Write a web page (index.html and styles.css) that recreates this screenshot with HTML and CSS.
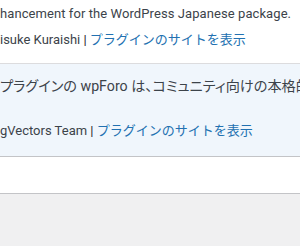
FILE: index.html
```html
<!DOCTYPE html>
<html lang="ja">
<head>
    <meta charset="UTF-8">
    <title>プラグイン</title>
    <link rel="stylesheet" href="styles.css">
</head>
<body>
    <div class="plugin-list">
        <!-- WP Multibyte Patch -->
        <div class="plugin-row">
            <p class="desc line-1">hancement for the WordPress Japanese package.</p>
            <p class="meta line-2">isuke Kuraishi <span class="sep">|</span> <a href="#">プラグインのサイトを表示</a></p>
        </div>

        <!-- wpForo (有効) -->
        <div class="plugin-row active">
            <p class="desc line-3">プラグインの wpForo は、コミュニティ向けの本格的なフォーラムです。</p>
            <p class="meta line-4">gVectors Team <span class="sep">|</span> <a href="#">プラグインのサイトを表示</a></p>
        </div>

        <div class="plugin-foot"></div>
    </div>
</body>
</html>
```

FILE: styles.css
```css
body {
    margin: 0;
    background: #f0f0f1;
    color: #3c434a;
    font-family: Roboto, "Noto Sans CJK JP", sans-serif;
    font-size: 13px;
    line-height: 20px;
}

.plugin-list {
    background: #fff;
    overflow: hidden;
}

.plugin-row {
    padding: 4px 0 13px;
    border-bottom: 1px solid #dcdcde;
}

.plugin-row.active {
    background: #f0f6fc;
    padding: 12px 0 15px;
    border-bottom-color: #c3c4c7;
}

.plugin-row p {
    margin: 0;
    white-space: nowrap;
}

.plugin-row .meta {
    margin-top: 6px;
}

.plugin-row.active .meta {
    margin-top: 25px;
}

.line-1 {
    letter-spacing: 0.08px;
}

.line-2 {
    margin-left: 1px;
}

.line-3 {
    font-feature-settings: "palt";
    font-size: 14.2px;
}

.line-4 {
    margin-left: -3px;
}

.plugin-row a {
    color: #2271b1;
    text-decoration: none;
}

.sep {
    color: #1d2327;
}

.plugin-foot {
    height: 36px;
    border-bottom: 1px solid #c3c4c7;
}
```
